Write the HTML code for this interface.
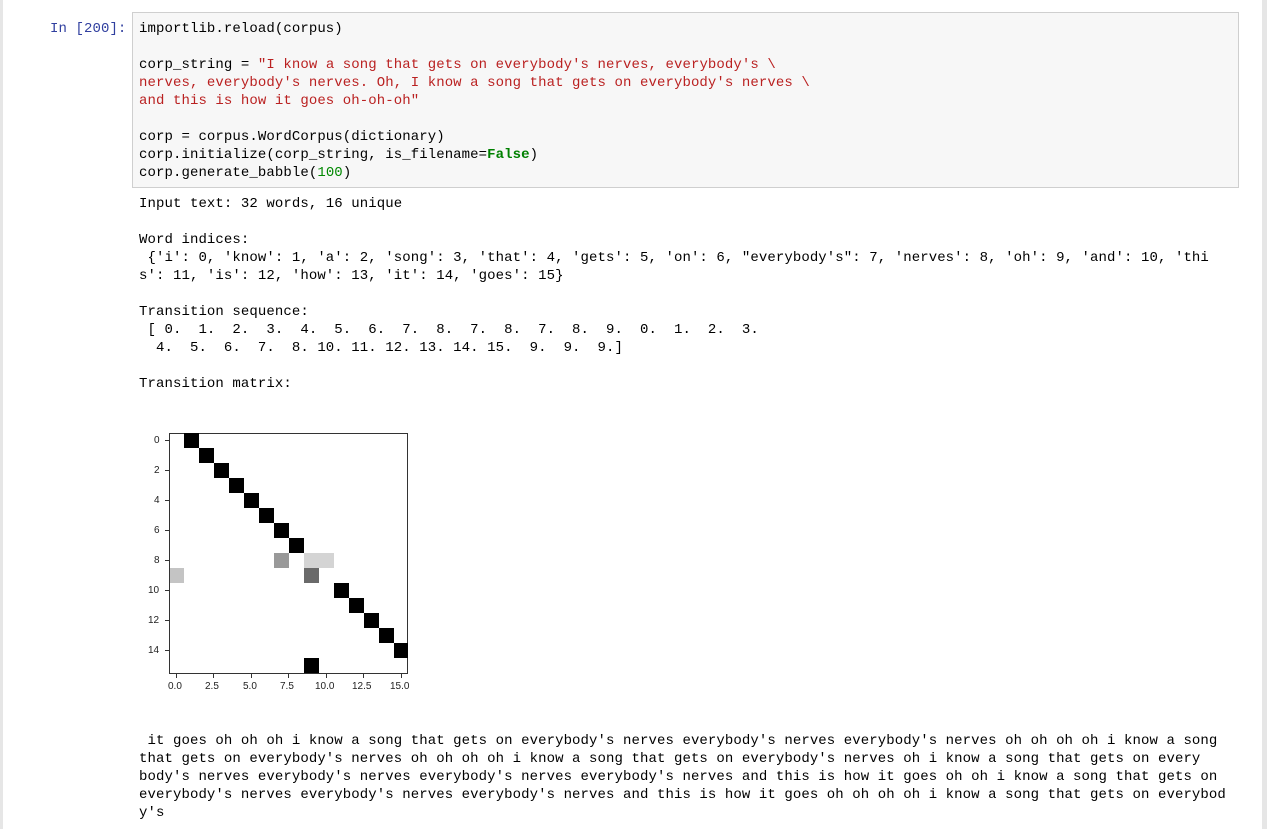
<!DOCTYPE html>
<html><head><meta charset="utf-8"><style>
body{margin:0;width:1267px;height:829px;background:#fff;position:relative;overflow:hidden;font-family:"Liberation Mono",monospace;font-size:14px;color:#000}
.l{position:absolute;left:139px;white-space:pre;line-height:18px;height:18px;letter-spacing:0.09px}
.s{color:#ba2121}.n{color:#080}.k{color:#008000;font-weight:bold}
.c{position:absolute;width:15px;height:15px}
.t{position:absolute;font-family:"Liberation Sans",sans-serif;font-size:10px;color:#222;white-space:nowrap}
.yt{position:absolute;left:165px;width:4px;height:1px;background:#333}
.xt{position:absolute;top:674px;width:1px;height:4px;background:#333}
</style></head><body>
<div style="position:absolute;left:0;top:0;width:3px;height:829px;background:#e6e6e6"></div>
<div style="position:absolute;right:0;top:0;width:5px;height:829px;background:#e6e6e6"></div>
<div style="position:absolute;left:132px;top:12px;width:1105px;height:174px;background:#f7f7f7;border:1px solid #cfcfcf"></div>
<div class="l" style="left:50px;top:20px;color:#303f9f">In [200]:</div>
<div class="l" style="top:20px">importlib.reload(corpus)</div>
<div class="l" style="top:56px">corp_string = <span class="s">"I know a song that gets on everybody's nerves, everybody's \</span></div>
<div class="l s" style="top:74px">nerves, everybody's nerves. Oh, I know a song that gets on everybody's nerves \</div>
<div class="l s" style="top:92px">and this is how it goes oh-oh-oh"</div>
<div class="l" style="top:128px">corp = corpus.WordCorpus(dictionary)</div>
<div class="l" style="top:146px">corp.initialize(corp_string, is_filename=<span class="k">False</span>)</div>
<div class="l" style="top:164px">corp.generate_babble(<span class="n">100</span>)</div>
<div class="l" style="top:195px">Input text: 32 words, 16 unique</div>
<div class="l" style="top:231px">Word indices:</div>
<div class="l" style="top:249px"> {'i': 0, 'know': 1, 'a': 2, 'song': 3, 'that': 4, 'gets': 5, 'on': 6, "everybody's": 7, 'nerves': 8, 'oh': 9, 'and': 10, 'thi</div>
<div class="l" style="top:267px">s': 11, 'is': 12, 'how': 13, 'it': 14, 'goes': 15}</div>
<div class="l" style="top:303px">Transition sequence:</div>
<div class="l" style="top:321px"> [ 0.  1.  2.  3.  4.  5.  6.  7.  8.  7.  8.  7.  8.  9.  0.  1.  2.  3.</div>
<div class="l" style="top:339px">  4.  5.  6.  7.  8. 10. 11. 12. 13. 14. 15.  9.  9.  9.]</div>
<div class="l" style="top:375px">Transition matrix:</div>
<div style="position:absolute;left:169px;top:433px;width:239px;height:241px;border:1px solid #333;box-sizing:border-box;background:#fff"></div>
<div class="c" style="left:184px;top:433px;background:#000"></div>
<div class="c" style="left:199px;top:448px;background:#000"></div>
<div class="c" style="left:214px;top:463px;background:#000"></div>
<div class="c" style="left:229px;top:478px;background:#000"></div>
<div class="c" style="left:244px;top:493px;background:#000"></div>
<div class="c" style="left:259px;top:508px;background:#000"></div>
<div class="c" style="left:274px;top:523px;background:#000"></div>
<div class="c" style="left:289px;top:538px;background:#000"></div>
<div class="c" style="left:274px;top:553px;background:#999"></div>
<div class="c" style="left:304px;top:553px;width:30px;background:#d4d4d4"></div>
<div class="c" style="left:170px;top:568px;width:14px;background:#c4c4c4"></div>
<div class="c" style="left:304px;top:568px;background:#6a6a6a"></div>
<div class="c" style="left:334px;top:583px;background:#000"></div>
<div class="c" style="left:349px;top:598px;background:#000"></div>
<div class="c" style="left:364px;top:613px;background:#000"></div>
<div class="c" style="left:379px;top:628px;background:#000"></div>
<div class="c" style="left:394px;top:643px;width:14px;background:#000"></div>
<div class="c" style="left:304px;top:658px;background:#000"></div>
<div class="yt" style="top:440px"></div><div class="yt" style="top:470px"></div><div class="yt" style="top:500px"></div><div class="yt" style="top:530px"></div><div class="yt" style="top:560px"></div><div class="yt" style="top:590px"></div><div class="yt" style="top:620px"></div><div class="yt" style="top:650px"></div>
<div class="xt" style="left:176px"></div><div class="xt" style="left:213px"></div><div class="xt" style="left:251px"></div><div class="xt" style="left:288px"></div><div class="xt" style="left:326px"></div><div class="xt" style="left:363px"></div><div class="xt" style="left:401px"></div>
<div class="t" style="left:154px;top:435px">0</div>
<div class="t" style="left:154px;top:465px">2</div>
<div class="t" style="left:154px;top:495px">4</div>
<div class="t" style="left:154px;top:525px">6</div>
<div class="t" style="left:154px;top:555px">8</div>
<div class="t" style="left:148px;top:585px">10</div>
<div class="t" style="left:148px;top:615px">12</div>
<div class="t" style="left:148px;top:645px">14</div>
<div class="t" style="left:168px;top:681px">0.0</div>
<div class="t" style="left:205px;top:681px">2.5</div>
<div class="t" style="left:243px;top:681px">5.0</div>
<div class="t" style="left:280px;top:681px">7.5</div>
<div class="t" style="left:315px;top:681px">10.0</div>
<div class="t" style="left:352px;top:681px">12.5</div>
<div class="t" style="left:390px;top:681px">15.0</div>
<div class="l" style="top:732px"> it goes oh oh oh i know a song that gets on everybody's nerves everybody's nerves everybody's nerves oh oh oh oh i know a song</div>
<div class="l" style="top:750px">that gets on everybody's nerves oh oh oh oh i know a song that gets on everybody's nerves oh i know a song that gets on every</div>
<div class="l" style="top:768px">body's nerves everybody's nerves everybody's nerves everybody's nerves and this is how it goes oh oh i know a song that gets on</div>
<div class="l" style="top:786px">everybody's nerves everybody's nerves everybody's nerves and this is how it goes oh oh oh oh i know a song that gets on everybod</div>
<div class="l" style="top:804px">y's</div>
</body></html>
